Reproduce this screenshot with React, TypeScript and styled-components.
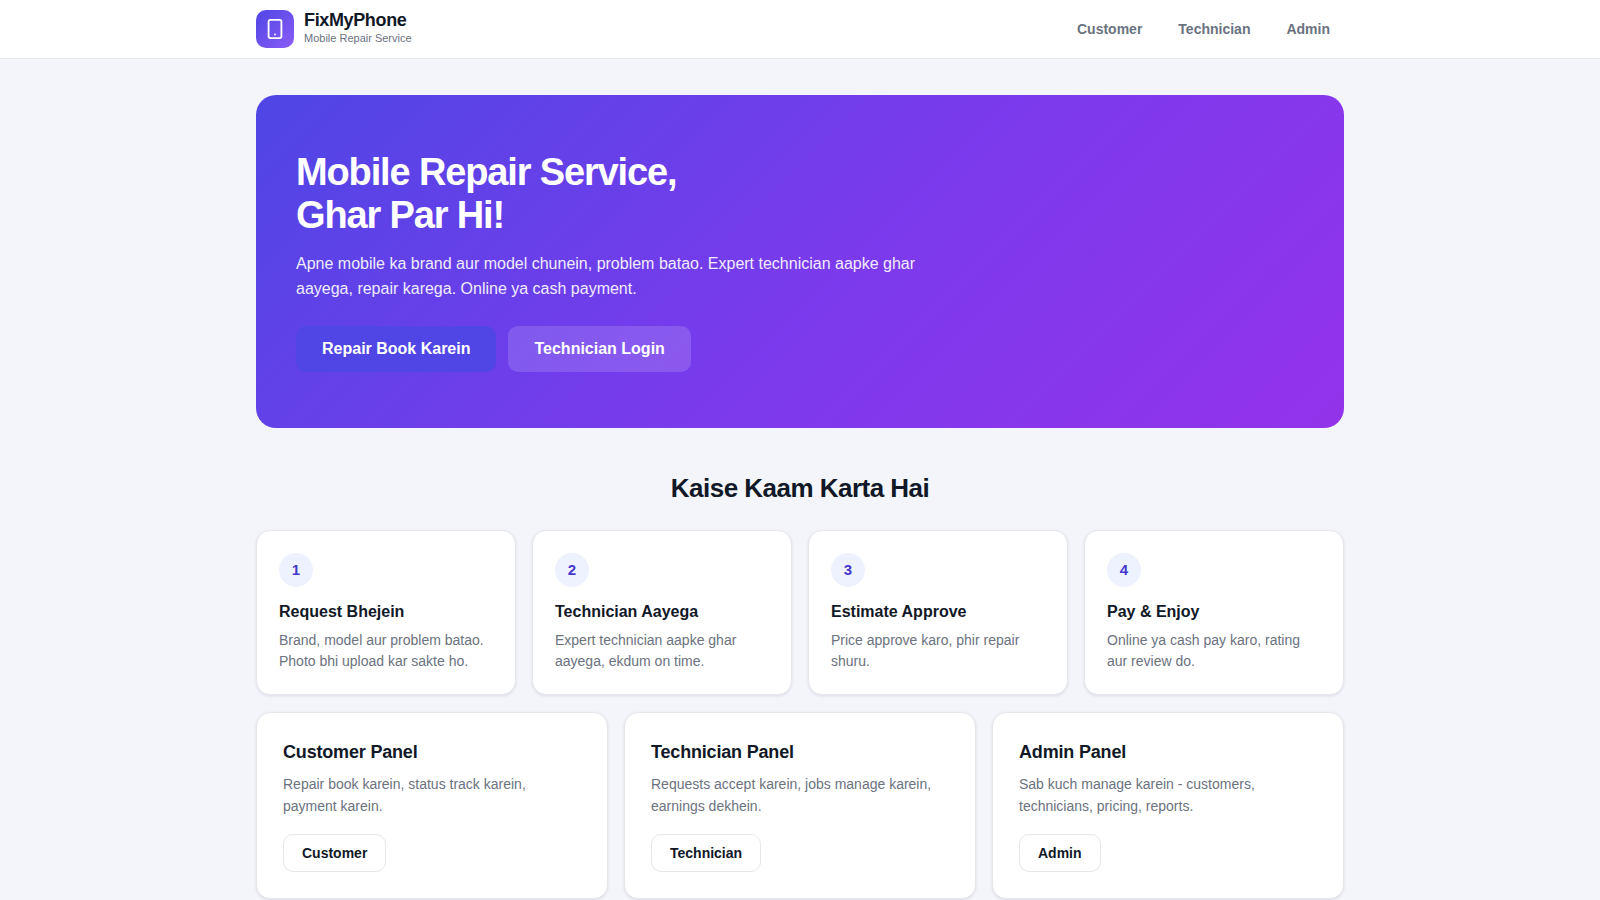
import React from "react";
import styled, { createGlobalStyle, css } from "styled-components";
import { Smartphone } from "lucide-react";

const GlobalStyle = createGlobalStyle`
  *, *::before, *::after { box-sizing: border-box; }
  body {
    margin: 0;
    background: #f4f5fb;
    color: #111827;
    font-family: "Liberation Sans", Arial, sans-serif;
    font-size: 16px;
  }
  h1, h2, h3, p { margin: 0; }
  button { font-family: inherit; cursor: pointer; }
`;

const Header = styled.header`
  background: #ffffff;
  border-bottom: 1px solid #e5e7eb;
`;

const Container = styled.div`
  max-width: 1120px;
  margin: 0 auto;
  padding: 0 16px;
`;

const HeaderBar = styled(Container)`
  display: flex;
  align-items: center;
  justify-content: space-between;
  padding: 10px 16px;
`;

const Brand = styled.a`
  display: flex;
  align-items: center;
  gap: 10px;
  color: inherit;
  text-decoration: none;
`;

const BrandMark = styled.span`
  display: grid;
  place-items: center;
  width: 38px;
  height: 38px;
  border-radius: 10px;
  background: linear-gradient(135deg, #4f46e5, #8b5cf6);
  color: #ffffff;
`;

const BrandText = styled.span`
  display: flex;
  flex-direction: column;
`;

const BrandName = styled.span`
  font-size: 18px;
  line-height: 18px;
  font-weight: 700;
  letter-spacing: -0.02em;
`;

const BrandTagline = styled.span`
  font-size: 11px;
  line-height: 18px;
  color: #6b7280;
`;

const Nav = styled.nav`
  display: flex;
  gap: 8px;
`;

const NavLink = styled.a`
  padding: 8px 14px;
  font-size: 14px;
  line-height: 22px;
  font-weight: 600;
  color: #6b7280;
  text-decoration: none;
`;

const Main = styled(Container).attrs({ as: "main" })`
  padding: 36px 16px;
`;

const Hero = styled.section`
  padding: 56px 40px;
  border-radius: 20px;
  background: linear-gradient(135deg, #4f46e5 0%, #7c3aed 55%, #9333ea 100%);
  color: #ffffff;
`;

const HeroTitle = styled.h1`
  margin-bottom: 14px;
  font-size: 38px;
  line-height: 43px;
  font-weight: 800;
  letter-spacing: -0.03em;
`;

const HeroText = styled.p`
  max-width: 640px;
  margin-bottom: 25px;
  font-size: 16px;
  line-height: 25px;
  opacity: 0.9;
`;

const HeroActions = styled.div`
  display: flex;
  flex-wrap: wrap;
  gap: 12px;
`;

const Button = styled.button<{ $variant: "primary" | "glass" | "outline" }>`
  font-weight: 600;
  border-radius: 10px;

  ${({ $variant }) =>
    $variant === "outline"
      ? css`
          padding: 8px 18px;
          border: 1px solid #e5e7eb;
          background: #ffffff;
          color: #111827;
          font-size: 14px;
          line-height: 20px;
        `
      : css`
          padding: 14px 26px;
          border: 0;
          background: ${$variant === "primary" ? "#4f46e5" : "rgba(255, 255, 255, 0.15)"};
          color: #ffffff;
          font-size: 16px;
          line-height: 18px;
        `}
`;

const SectionTitle = styled.h2`
  margin: 40px 0 22px;
  font-size: 26px;
  line-height: 40px;
  font-weight: 700;
  letter-spacing: -0.02em;
  text-align: center;
`;

const Grid = styled.div<{ $columns: number }>`
  display: grid;
  grid-template-columns: repeat(${({ $columns }) => $columns}, 1fr);
  gap: 16px;
  margin-bottom: 17px;
`;

const Card = styled.article<{ $padding: number }>`
  padding: ${({ $padding }) => $padding}px;
  border: 1px solid #e5e7eb;
  border-radius: 14px;
  background: #ffffff;
  box-shadow: 0 1px 3px rgba(15, 23, 42, 0.1);
`;

const StepNumber = styled.div`
  display: grid;
  place-items: center;
  width: 34px;
  height: 34px;
  margin-bottom: 12px;
  border-radius: 50%;
  background: #eef2ff;
  color: #4338ca;
  font-size: 15px;
  line-height: 18px;
  font-weight: 700;
`;

const StepTitle = styled.h3`
  margin-bottom: 6px;
  font-size: 16px;
  line-height: 25px;
`;

const StepText = styled.p`
  font-size: 14px;
  line-height: 21px;
  color: #6b7280;
`;

const PanelTitle = styled.h3`
  margin-bottom: 8px;
  font-size: 18px;
  line-height: 26px;
  letter-spacing: -0.01em;
`;

const PanelText = styled.p`
  margin-bottom: 17px;
  font-size: 14px;
  line-height: 22px;
  color: #6b7280;
`;

const navItems = ["Customer", "Technician", "Admin"];

const steps = [
  { title: "Request Bhejein", text: "Brand, model aur problem batao. Photo bhi upload kar sakte ho." },
  { title: "Technician Aayega", text: "Expert technician aapke ghar aayega, ekdum on time." },
  { title: "Estimate Approve", text: "Price approve karo, phir repair shuru." },
  { title: "Pay & Enjoy", text: "Online ya cash pay karo, rating aur review do." },
];

const panels = [
  { name: "Customer", text: "Repair book karein, status track karein, payment karein." },
  { name: "Technician", text: "Requests accept karein, jobs manage karein, earnings dekhein." },
  { name: "Admin", text: "Sab kuch manage karein - customers, technicians, pricing, reports." },
];

export default function App() {
  return (
    <>
      <GlobalStyle />
      <Header>
        <HeaderBar>
          <Brand href="#home">
            <BrandMark>
              <Smartphone size={22} aria-hidden="true" />
            </BrandMark>
            <BrandText>
              <BrandName>FixMyPhone</BrandName>
              <BrandTagline>Mobile Repair Service</BrandTagline>
            </BrandText>
          </Brand>
          <Nav>
            {navItems.map((item) => (
              <NavLink key={item} href={`#${item.toLowerCase()}`}>
                {item}
              </NavLink>
            ))}
          </Nav>
        </HeaderBar>
      </Header>
      <Main>
        <Hero>
          <HeroTitle>
            Mobile Repair Service,
            <br />
            Ghar Par Hi!
          </HeroTitle>
          <HeroText>
            Apne mobile ka brand aur model chunein, problem batao. Expert technician aapke ghar
            aayega, repair karega. Online ya cash payment.
          </HeroText>
          <HeroActions>
            <Button type="button" $variant="primary">Repair Book Karein</Button>
            <Button type="button" $variant="glass">Technician Login</Button>
          </HeroActions>
        </Hero>
        <SectionTitle>Kaise Kaam Karta Hai</SectionTitle>
        <Grid $columns={4}>
          {steps.map((step, index) => (
            <Card key={step.title} $padding={22}>
              <StepNumber>{index + 1}</StepNumber>
              <StepTitle>{step.title}</StepTitle>
              <StepText>{step.text}</StepText>
            </Card>
          ))}
        </Grid>
        <Grid $columns={3}>
          {panels.map((panel) => (
            <Card key={panel.name} $padding={26}>
              <PanelTitle>{panel.name} Panel</PanelTitle>
              <PanelText>{panel.text}</PanelText>
              <Button type="button" $variant="outline">{panel.name}</Button>
            </Card>
          ))}
        </Grid>
      </Main>
    </>
  );
}
